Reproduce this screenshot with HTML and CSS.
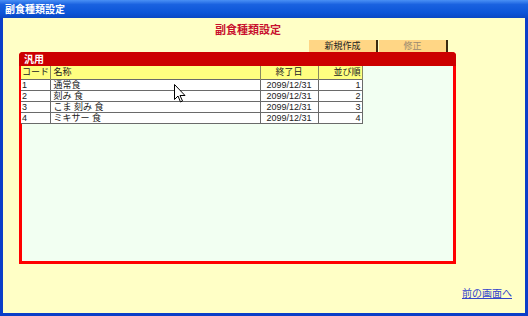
FILE: index.html
```html
<!DOCTYPE html>
<html lang="ja">
<head>
    <meta charset="UTF-8">
    <title>副食種類設定</title>
    <link rel="stylesheet" href="styles.css">
</head>
<body>
    <div class="window">
        <div class="titlebar">副食種類設定</div>
        <div class="client">
            <h1 class="heading">副食種類設定</h1>
            <div class="toolbar">
                <button class="tool-btn">新規作成</button>
                <button class="tool-btn disabled">修正</button>
            </div>
            <div class="panel">
                <div class="panel-head">汎用</div>
                <div class="panel-body">
                    <table class="grid">
                        <colgroup>
                            <col class="col-code">
                            <col class="col-name">
                            <col class="col-date">
                            <col class="col-order">
                        </colgroup>
                        <thead>
                            <tr>
                                <th>コード</th>
                                <th>名称</th>
                                <th class="c">終了日</th>
                                <th class="r">並び順</th>
                            </tr>
                        </thead>
                        <tbody>
                            <tr><td>1</td><td>通常食</td><td class="c">2099/12/31</td><td class="r">1</td></tr>
                            <tr><td>2</td><td>刻み 食</td><td class="c">2099/12/31</td><td class="r">2</td></tr>
                            <tr><td>3</td><td>こま 刻み 食</td><td class="c">2099/12/31</td><td class="r">3</td></tr>
                            <tr><td>4</td><td>ミキサー 食</td><td class="c">2099/12/31</td><td class="r">4</td></tr>
                        </tbody>
                    </table>
                </div>
            </div>
            <div class="footer">
                <a href="#" class="back-link">前の画面へ</a>
            </div>
        </div>
        <svg class="cursor" width="12" height="19" viewBox="0 0 12 19">
            <path d="M0.5 0.5 L0.5 15.5 L4 12 L6.5 18 L8.5 17 L6 11.5 L11 11.5 Z" fill="#fff" stroke="#000" stroke-width="1"/>
        </svg>
    </div>
</body>
</html>
```

FILE: styles.css
```css
body {
    margin: 0;
    font-family: "Noto Sans CJK JP", "Liberation Sans", sans-serif;
    font-size: 10px;
}
.window {
    position: relative;
    width: 528px;
    height: 316px;
    display: flex;
    flex-direction: column;
    background-color: #0a3ec8;
}
.titlebar {
    height: 18px;
    line-height: 17px;
    padding-left: 5px;
    color: #ffffff;
    font-size: 10px;
    font-weight: bold;
    background: linear-gradient(#4a90f5, #1a62e0 25%, #0c55d8 70%, #0a48c4);
}
.client {
    flex: 1;
    display: flex;
    flex-direction: column;
    margin: 0 3px 3px 3px;
    background-color: #ffffc6;
}
.heading {
    margin: 3px 0 0 212px;
    height: 17px;
    line-height: 17px;
    font-size: 11px;
    font-weight: bold;
    color: #c8102e;
}
.toolbar {
    display: flex;
    justify-content: flex-end;
    gap: 1px;
    padding-right: 77px;
    margin-top: 2px;
}
.tool-btn {
    width: 69px;
    height: 12px;
    padding: 0;
    border: none;
    border-right: 2px solid #3a2a10;
    background-color: #ffd685;
    font-family: inherit;
    font-size: 9px;
    line-height: 12px;
    color: #222222;
}
.tool-btn.disabled {
    color: #9a8a70;
}
.panel {
    width: 431px;
    height: 209px;
    margin-left: 16px;
    border: 3px solid #ff0000;
    border-top: none;
    border-radius: 4px 4px 0 0;
    display: flex;
    flex-direction: column;
    background-color: #f2fff2;
}
.panel-head {
    height: 14px;
    margin: 0 -3px;
    padding-left: 5px;
    line-height: 14px;
    border-radius: 4px 4px 0 0;
    background-color: #cc0000;
    color: #ffffff;
    font-weight: bold;
}
.panel-body {
    flex: 1;
}
.grid {
    border-collapse: collapse;
    table-layout: fixed;
    width: 341px;
    margin-left: -1px;
    font-family: "Liberation Sans", "Noto Sans CJK JP", sans-serif;
    font-size: 9px;
}
.col-code {
    width: 29px;
}
.col-name {
    width: 210px;
}
.col-date {
    width: 58px;
}
.col-order {
    width: 44px;
}
.grid th,
.grid td {
    padding: 0 1px;
    white-space: nowrap;
    overflow: hidden;
    color: #222222;
    text-align: left;
}
.grid th {
    height: 13px;
    line-height: 13px;
    background-color: #ffff80;
    border-right: 1px solid #8a8a60;
    font-weight: normal;
}
.grid td {
    height: 10px;
    line-height: 10px;
    background-color: #ffffff;
    border: 1px solid #6a6a6a;
    border-top: none;
}
.grid td:first-child {
    border-left: none;
}
.grid tbody tr:first-child td {
    border-top: 1px solid #6a6a6a;
}
.grid td:nth-child(2),
.grid th:nth-child(2) {
    padding-left: 3px;
}
.grid .c {
    text-align: center;
}
.grid .r {
    text-align: right;
}
.footer {
    display: flex;
    justify-content: flex-end;
    padding: 21px 13px 0 0;
}
.back-link {
    color: #3344cc;
    font-size: 10px;
}
.cursor {
    position: absolute;
    left: 174px;
    top: 84px;
}
```
